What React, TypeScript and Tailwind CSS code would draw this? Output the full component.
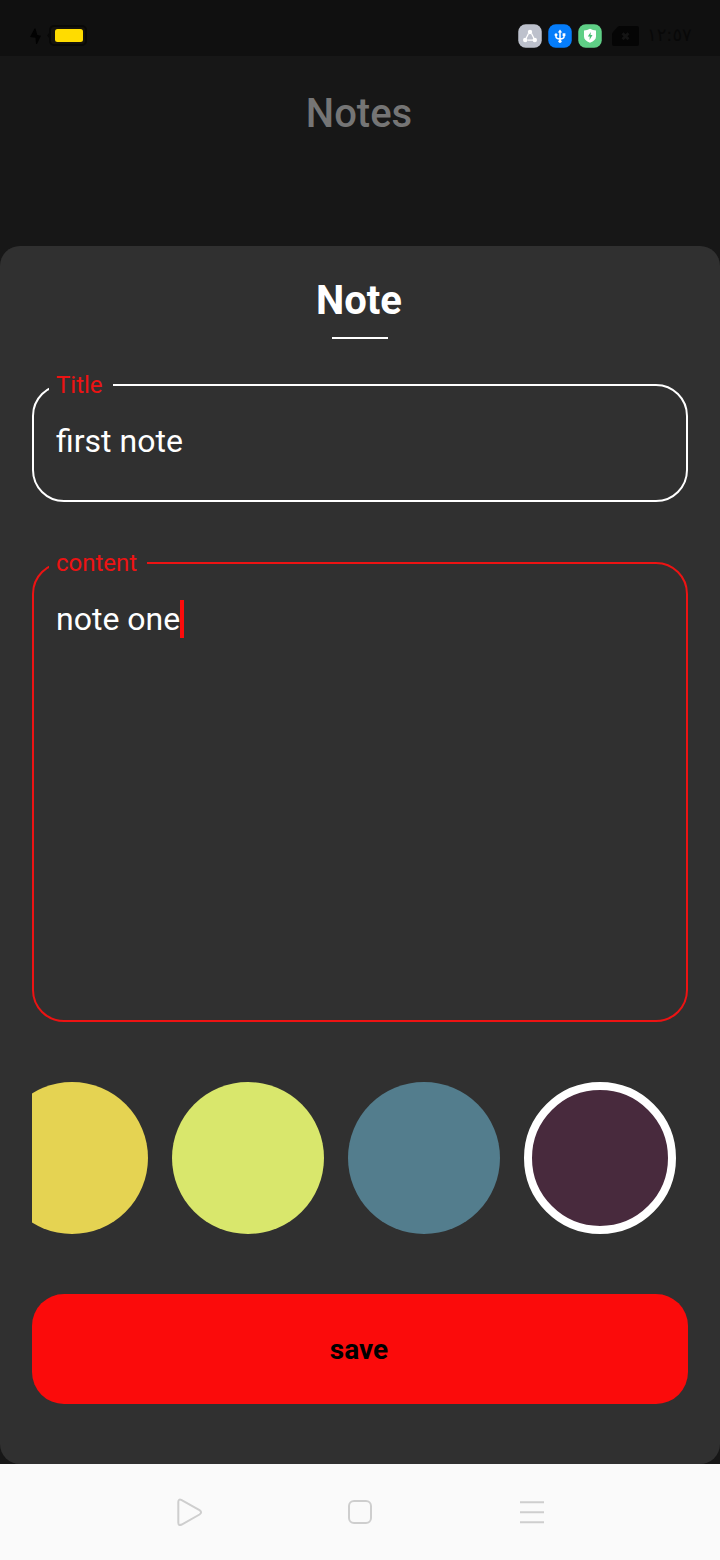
import type { ReactNode } from "react";

function StatusBar() {
  return (
    <header className="flex h-14 shrink-0 items-start bg-[#101010] pt-6 pl-[30px] pr-[29px]">
      <svg width="57" height="24" viewBox="0 0 57 24">
        <path d="M4.500 4.500 0 13l5.500.7L6 20l1 0 4-8.300-3.700-.7L5.500 4.500z" fill="#020202" />
        <path d="M19.500 8.500 17 11.500l2.500 3z" fill="#080808" />
        <rect x="20" y="2" width="36" height="19" rx="4" fill="#15130d" stroke="#080808" strokeWidth="2" />
        <rect x="25" y="5" width="28" height="13" rx="2.500" fill="#ffdc00" />
      </svg>
      <div className="ml-auto flex items-center">
        <svg width="24" height="24" viewBox="0 0 24 24">
          <rect x=".25" y=".25" width="23.500" height="23.500" rx="7.500" fill="#bdc1cc" />
          <path d="M10.500 9.500 8 14.500M13.500 9.500l2.500 5M9.500 16.200h5.500" stroke="#fff" strokeWidth="1.300" fill="none" />
          <g fill="#fff">
            <circle cx="12" cy="8" r="2.200" />
            <circle cx="7.200" cy="16" r="2.200" />
            <circle cx="16.800" cy="16" r="2.200" />
          </g>
        </svg>
        <svg className="ml-1.5" width="24" height="24" viewBox="0 0 24 24">
          <rect x=".25" y=".25" width="23.500" height="23.500" rx="7.500" fill="#057dfb" />
          <path d="M12 8v9M8 11v1.800q0 2 4 2.300 4-.3 4-2.300V11" stroke="#fff" strokeWidth="1.500" fill="none" />
          <path d="m12 5.500 2.200 3H9.800z" fill="#fff" />
          <circle cx="8" cy="10.700" r="1.500" fill="#fff" />
          <rect x="14.600" y="9.300" width="2.800" height="2.800" fill="#fff" />
          <circle cx="12" cy="17.300" r="1.600" fill="#fff" />
        </svg>
        <svg className="ml-1.5" width="24" height="24" viewBox="0 0 24 24">
          <rect x=".25" y=".25" width="23.500" height="23.500" rx="7.500" fill="#5fcf86" />
          <path d="M12 4.700q3 1.800 6 1.800v6q0 4-6 6.200-6-2.200-6-6.200v-6q3 0 6-1.800z" fill="#fff" />
          <path d="m12.800 8-3 4.500h2l-.3 3.500 3-5h-2z" fill="#46bd72" />
        </svg>
        <svg className="ml-2.5" width="27" height="24" viewBox="0 0 27 24">
          <path d="M7.500 2H25q2 0 2 2v16q0 2-2 2H2q-2 0-2-2V10.500q0-1.500 1-2.500l4.500-5q1-1 2-1z" fill="#050505" />
          <path d="m10.500 9.200 6 6m0-6-6 6" stroke="#141414" strokeWidth="2.800" />
        </svg>
        <span
          dir="ltr"
          className="ml-2 inline-block w-[44px] whitespace-nowrap pb-0.5 text-center font-['DejaVu_Sans',sans-serif] text-[18px] leading-[22px] text-[#080808]"
        >
          ١٢:٥٧
        </span>
      </div>
    </header>
  );
}

interface FieldProps {
  label: string;
  size: string;
  tone: string;
  children: ReactNode;
}

function Field({ label, size, tone, children }: FieldProps) {
  return (
    <div className={`relative rounded-[32px] border-2 ${size} ${tone}`}>
      <span className="absolute -top-[15px] left-[15px] bg-[#303030] pl-[7px] pr-2.5 text-2xl leading-7 text-[#ed1313]">
        {label}
      </span>
      <div className="flex items-center pl-[22px] text-[32px] leading-[38px] text-white">{children}</div>
    </div>
  );
}

const swatches = [
  { color: "bg-[#e5d352]", selected: false },
  { color: "bg-[#d9e76c]", selected: false },
  { color: "bg-[#537d8d]", selected: false },
  { color: "bg-[#482a3d]", selected: true },
];

function NavigationBar() {
  return (
    <nav className="flex h-24 shrink-0 items-center bg-[#fafafa] text-[#cecece]">
      <svg width="720" height="96" viewBox="0 0 720 96" fill="none" stroke="currentColor" strokeWidth="2">
        <path d="M178.300 38v20.500q0 3.600 3.400 2l17.800-10q3.200-2.200 0-4.400l-17.800-10q-3.400-1.600-3.400 1.900z" />
        <rect x="349" y="37" width="22" height="22" rx="5" />
        <path d="M520 38.300h24M520 48.300h24M520 58.300h24" />
      </svg>
    </nav>
  );
}

export default function App() {
  return (
    <div className="flex h-[1560px] w-[720px] flex-col overflow-hidden bg-[#171717] font-[Roboto,sans-serif]">
      <StatusBar />
      <div className="h-[190px] shrink-0 pt-[34px] text-center text-[40px] font-medium leading-[48px] text-[#757575]">
        <h1 className="-ml-0.5">Notes</h1>
      </div>
      <main className="flex h-[1218px] shrink-0 flex-col rounded-[20px] bg-[#303030] px-8">
        <h2 className="mt-[31px] -ml-0.5 text-center text-[40px] font-bold leading-[48px] text-white">Note</h2>
        <div className="mx-auto mt-3 h-0.5 w-14 bg-white" />
        <div className="mt-[45px] flex flex-col gap-[60px]">
          <Field label="Title" size="h-[118px] pt-9" tone="border-white">
            first note
          </Field>
          <Field label="content" size="h-[460px] pt-9" tone="border-[#ed1313]">
            note one
            <span className="h-[38px] w-1 bg-[#fb0b0b]" />
          </Field>
        </div>
        <div className="mt-[60px] flex justify-end gap-6 overflow-hidden pr-3">
          {swatches.map(({ color, selected }) => (
            <button
              key={color}
              type="button"
              className={`size-[152px] shrink-0 rounded-full ${color} ${selected ? "border-8 border-white" : ""}`}
            />
          ))}
        </div>
        <button
          type="button"
          className="mt-[60px] h-[110px] shrink-0 rounded-[32px] bg-[#fb0b0b] pt-0.5 pr-0.5 text-[28px] font-bold leading-8 text-black"
        >
          save
        </button>
      </main>
      <NavigationBar />
    </div>
  );
}
